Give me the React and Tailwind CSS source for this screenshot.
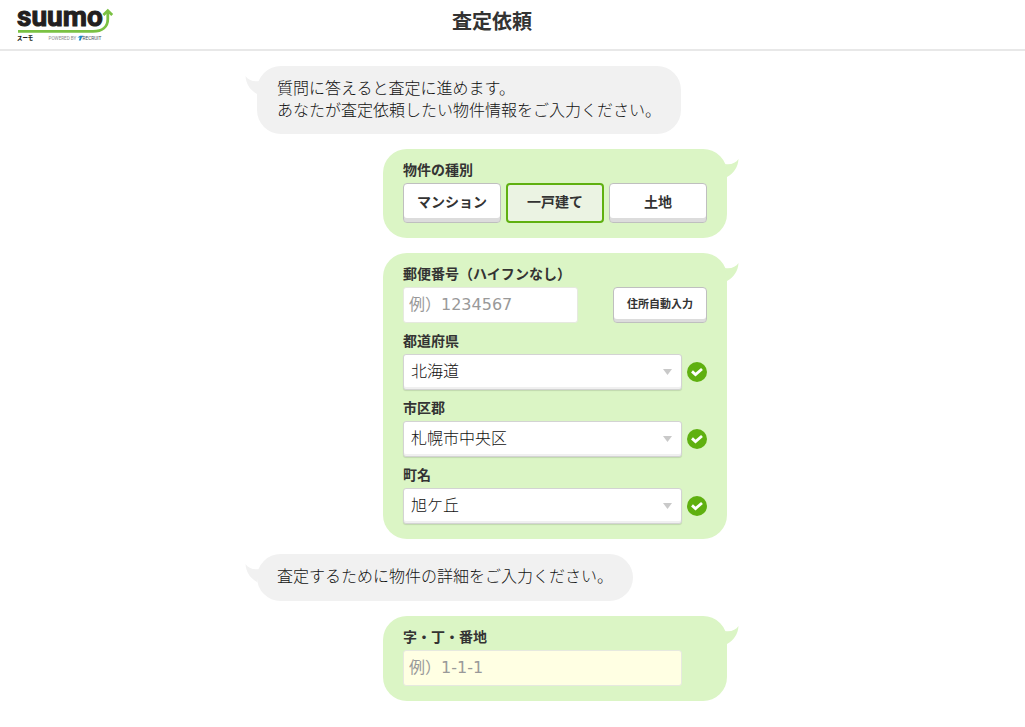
import { useState } from "react";

const FONT = "font-['DejaVu_Sans','Noto_Sans_CJK_JP',sans-serif]";

function Logo() {
  return (
    <a href="#" aria-label="SUUMO" className="shrink-0">
      <svg width="100" height="36" viewBox="0 0 100 36" role="img" aria-label="SUUMO" className="overflow-visible">
        <text x="0" y="20.3" fontFamily="Roboto, sans-serif" fontWeight="700" fontSize="28" fill="#231f20" stroke="#231f20" strokeWidth="1">suumo</text>
        <path d="M1 25.4H76C85 25.4 90.8 21 90.8 13V6" fill="none" stroke="#7ac143" strokeWidth="2.8" />
        <path d="M86.4 9L90.8 4.8L95.2 9" fill="none" stroke="#7ac143" strokeWidth="2.8" />
        <text x="0" y="34.2" fontFamily="'Noto Sans CJK JP', sans-serif" fontWeight="900" fontSize="5.4" fill="#231f20">スーモ</text>
        <text x="31.5" y="34.2" fontFamily="Roboto, sans-serif" fontSize="4.6" fill="#8a8a8a">POWERED BY</text>
        <path d="M60.5 31.4L63 29.8H66.6L64.8 31.4L63.8 34.4H61.8L62.8 31.4Z" fill="#1a86c8" />
        <text x="65.5" y="34.2" fontFamily="Roboto, sans-serif" fontSize="4.8" fill="#44525e">RECRUIT</text>
      </svg>
    </a>
  );
}

function Question({ children }) {
  return (
    <div className="relative min-h-[47px] self-start rounded-[24px] bg-[#f1f1f1] px-5 py-3 text-base leading-[22px] font-light text-[#111]">
      <svg className="absolute top-[10px] -left-3" width="14" height="18" viewBox="0 0 14 18" aria-hidden="true">
        <path d="M0.5 0C1 8 5 14 12 18L14 5C8 6 3 4 0.5 0Z" fill="#f1f1f1" />
      </svg>
      <p>{children}</p>
    </div>
  );
}

function Answer({ children }) {
  return (
    <div className="relative w-[344px] self-end rounded-[24px] bg-[#dbf5c5] px-5 pt-3 pb-[15px]">
      <svg className="absolute top-[10px] -right-3" width="14" height="18" viewBox="0 0 14 18" aria-hidden="true">
        <path d="M13.5 0C13 8 9 14 2 18L0 5C6 6 11 4 13.5 0Z" fill="#dbf5c5" />
      </svg>
      {children}
    </div>
  );
}

const labelStyle = "mb-1 block text-sm leading-[18px] font-bold";
const inputStyle =
  "block h-[36px] rounded-[3px] border border-[#e6e9df] px-[5px] pb-[2px] text-base text-[#333] outline-none placeholder:text-[#999]";

function SelectField({ id, label, options }) {
  return (
    <div>
      <label htmlFor={id} className={labelStyle}>{label}</label>
      <div className="flex items-center gap-[5px]">
        <div className="relative flex-1">
          <select
            id={id}
            className="block h-[36px] w-full appearance-none rounded-[3px] border border-[#d3d3d3] bg-white pr-8 pl-[7px] text-base font-light text-[#111] shadow-[inset_0_-2px_0_#f0f0f0,0_1px_1px_rgba(0,0,0,0.12)] outline-none"
          >
            {options.map((o) => (
              <option key={o}>{o}</option>
            ))}
          </select>
          <svg className="pointer-events-none absolute top-[15px] right-[10px]" width="9" height="6" viewBox="0 0 9 6" aria-hidden="true">
            <path d="M0 0H9L4.5 6Z" fill="#c9c9c9" />
          </svg>
        </div>
        <svg width="20" height="20" viewBox="0 0 20 20" role="img" aria-label="入力済み">
          <circle cx="10" cy="10" r="10" fill="#5fb010" />
          <path d="M5 9.4L8.5 12.6L15 7" fill="none" stroke="#fff" strokeWidth="2.8" />
        </svg>
      </div>
    </div>
  );
}

const types = ["マンション", "一戸建て", "土地"];

export default function App() {
  const [type, setType] = useState("一戸建て");
  return (
    <div className={`${FONT} min-h-screen bg-white text-[#333]`}>
      <header className="flex h-[51px] items-start border-b-2 border-[#e8e8e8] pt-[6px] pr-[158px] pl-[17px]">
        <Logo />
        <h1 className="flex-1 text-center text-xl leading-8 font-bold">査定依頼</h1>
      </header>
      <main className="pr-[41px]">
        <form className="mx-auto flex w-full max-w-[470px] flex-col gap-[15px] pt-[15px] pb-6" onSubmit={(e) => e.preventDefault()}>
          <Question>
            質問に答えると査定に進めます。
            <br />
            あなたが査定依頼したい物件情報をご入力ください。
          </Question>
          <Answer>
            <div role="group" aria-labelledby="type-label">
              <span id="type-label" className={labelStyle}>物件の種別</span>
              <div className="grid grid-cols-3 gap-[5px]">
                {types.map((t) => (
                  <button
                    key={t}
                    type="button"
                    aria-pressed={t === type}
                    onClick={() => setType(t)}
                    className={
                      t === type
                        ? "h-10 rounded-[4px] border-2 border-[#5fb010] bg-[#ebf3e3] pb-[2px] text-sm font-bold"
                        : "h-10 rounded-[4px] border border-[#bfbfbf] bg-white pb-[2px] text-sm font-bold shadow-[inset_0_-4px_0_#dcdcdc]"
                    }
                  >
                    {t}
                  </button>
                ))}
              </div>
            </div>
          </Answer>
          <Answer>
            <div className="flex flex-col gap-[9px]">
              <div>
                <label htmlFor="zip" className={labelStyle}>郵便番号（ハイフンなし）</label>
                <div className="flex items-center justify-between">
                  <input id="zip" type="text" inputMode="numeric" placeholder="例）1234567" className={`${inputStyle} w-[175px] bg-white`} />
                  <button
                    type="button"
                    className="h-[36px] w-[94px] rounded-[4px] border border-[#bfbfbf] bg-white text-[11px] font-bold shadow-[inset_0_-3px_0_#dcdcdc]"
                  >
                    住所自動入力
                  </button>
                </div>
              </div>
              <SelectField id="pref" label="都道府県" options={["北海道", "青森県", "岩手県"]} />
              <SelectField id="city" label="市区郡" options={["札幌市中央区", "札幌市北区", "札幌市東区"]} />
              <SelectField id="town" label="町名" options={["旭ケ丘", "大通西", "円山西町"]} />
            </div>
          </Answer>
          <Question>査定するために物件の詳細をご入力ください。</Question>
          <Answer>
            <label htmlFor="block" className={labelStyle}>字・丁・番地</label>
            <div className="pr-[25px]">
              <input id="block" type="text" placeholder="例）1-1-1" className={`${inputStyle} w-full bg-[#ffffe3]`} />
            </div>
          </Answer>
        </form>
      </main>
    </div>
  );
}
